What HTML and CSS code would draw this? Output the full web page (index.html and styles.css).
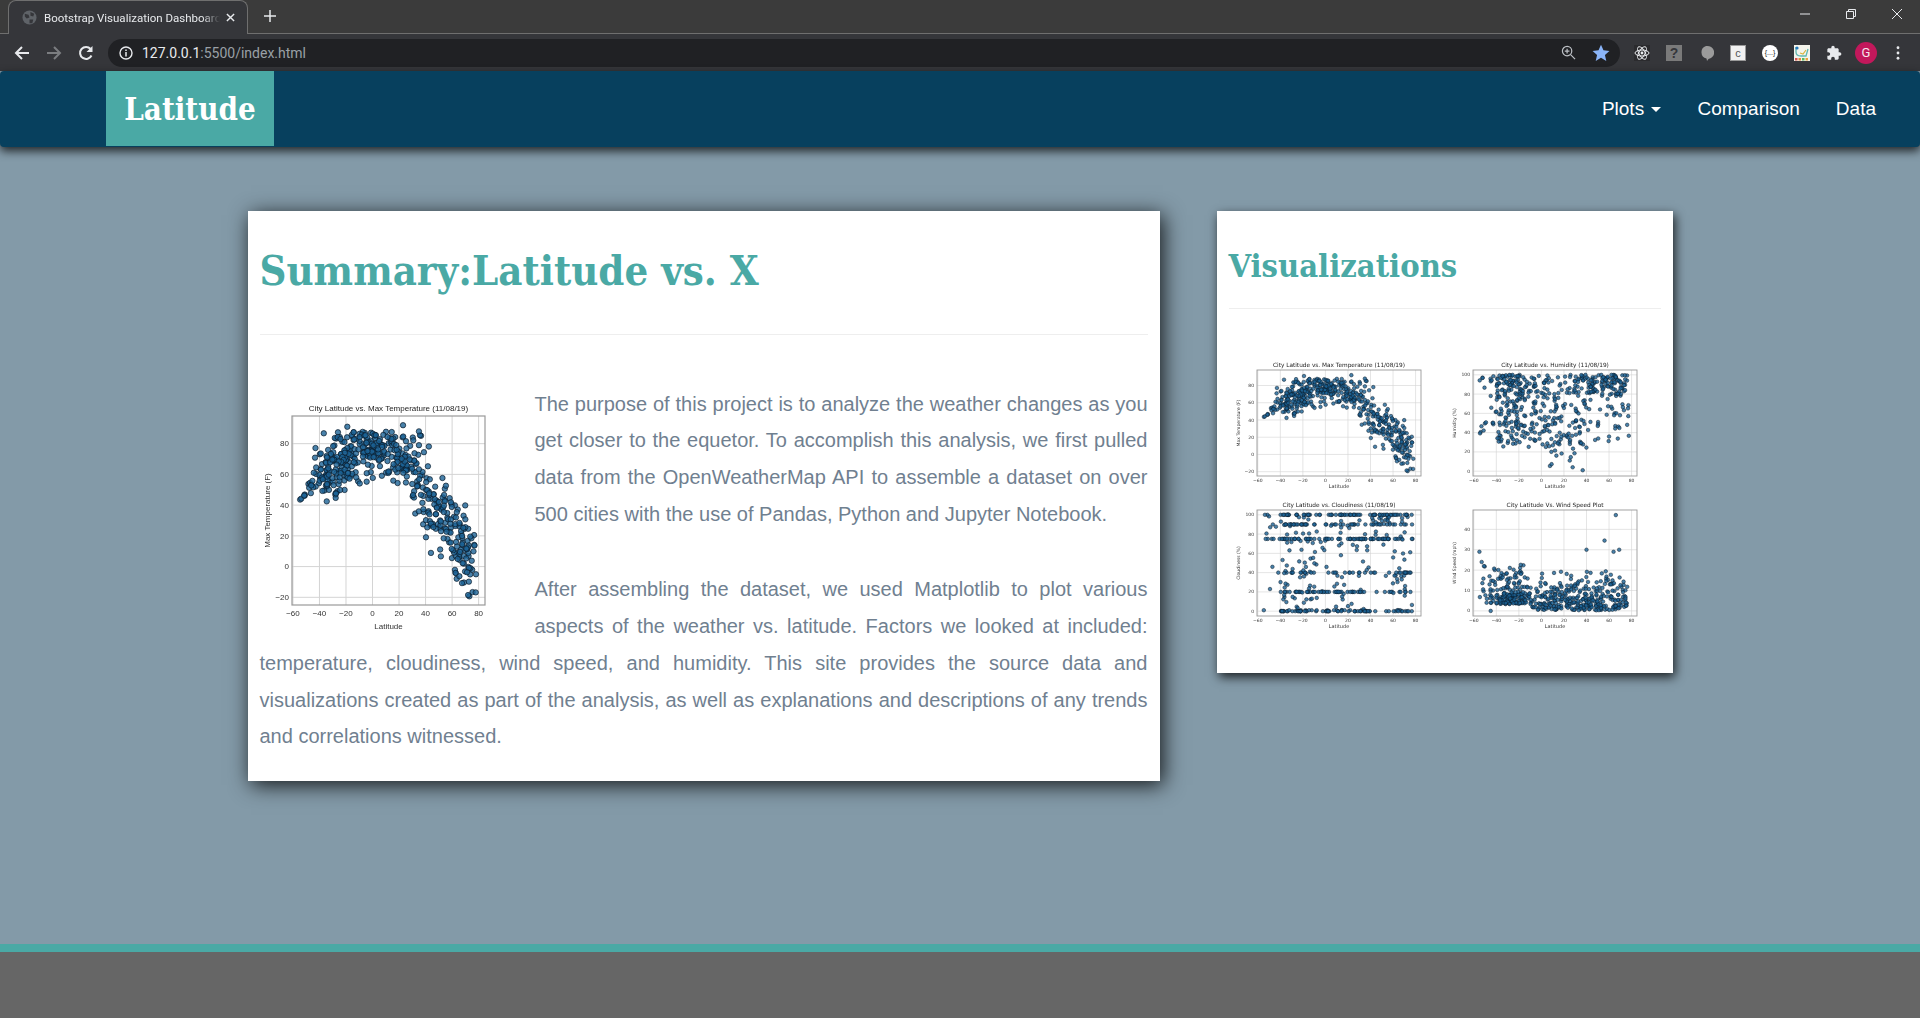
FILE: index.html
```html
<!DOCTYPE html>
<html lang="en">
<head>
  <meta charset="UTF-8" />
  <title>Bootstrap Visualization Dashboard</title>
  <link rel="stylesheet" href="styles.css">
</head>
<body>
  <div class="tabstrip">
    <div class="tab">
      <svg class="globe" viewBox="0 0 16 16"><circle cx="8" cy="8" r="7.5" fill="#5f6368"/><path d="M3 4l4 1 1 3-3 1-2-2zM9 2l4 2-1 3-3-1zM8 10l4 0-1 4-3 0z" fill="#35363a"/></svg>
      <span class="tab-title">Bootstrap Visualization Dashboard</span>
      <svg class="tab-close" viewBox="0 0 10 10"><path d="M1 1l8 8M9 1l-8 8" stroke="#e8eaed" stroke-width="1.6"/></svg>
    </div>
    <svg class="new-tab" viewBox="0 0 12 12"><path d="M6 0v12M0 6h12" stroke="#e8eaed" stroke-width="1.5"/></svg>
    <div class="window-btns">
      <svg viewBox="0 0 12 12"><path d="M1 6h10" stroke="#e8eaed" stroke-width="1"/></svg>
      <svg viewBox="0 0 12 12"><path d="M1.5 3.5h7v7h-7zM3.5 3.5v-2h7v7h-2" fill="none" stroke="#e8eaed" stroke-width="1"/></svg>
      <svg viewBox="0 0 12 12"><path d="M1 1l10 10M11 1l-10 10" stroke="#e8eaed" stroke-width="1"/></svg>
    </div>
  </div>

  <div class="toolbar">
    <svg class="tool" viewBox="0 0 16 16"><path d="M15 8H2M8 2L2 8l6 6" fill="none" stroke="#e8eaed" stroke-width="2"/></svg>
    <svg class="tool" viewBox="0 0 16 16"><path d="M1 8h13M8 2l6 6-6 6" fill="none" stroke="#7b7d80" stroke-width="2"/></svg>
    <svg class="tool" viewBox="0 0 16 16"><path d="M13.5 10.5A6 6 0 1 1 12.6 4" fill="none" stroke="#e8eaed" stroke-width="2"/><path d="M14.5 1v6h-6z" fill="#e8eaed"/></svg>
    <div class="omnibox">
      <svg class="info" viewBox="0 0 14 14"><circle cx="7" cy="7" r="6" fill="none" stroke="#e8eaed" stroke-width="1.4"/><path d="M7 6v4.5M7 3.4v1.6" stroke="#e8eaed" stroke-width="1.5"/></svg>
      <span class="url"><b>127.0.0.1</b>:5500/index.html</span>
      <svg class="zoom-ico" viewBox="0 0 16 16"><circle cx="6.5" cy="6.5" r="5" fill="none" stroke="#bdc1c6" stroke-width="1.3"/><path d="M10.2 10.2L15 15M4 6.5h5M6.5 4v5" stroke="#bdc1c6" stroke-width="1.3"/></svg>
      <svg class="star" viewBox="0 0 16 16"><path d="M8 .7l2.2 4.9 5.3.6-4 3.6 1.2 5.2L8 12.3l-4.7 2.7 1.2-5.2-4-3.6 5.3-.6z" fill="#8ab4f8"/></svg>
    </div>
    <div class="extensions">
      <svg class="ext" viewBox="0 0 16 16"><rect width="16" height="16" fill="#2b2b2e"/><g fill="none" stroke="#e8eaed" stroke-width="1"><ellipse cx="8" cy="8" rx="7" ry="3"/><ellipse cx="8" cy="8" rx="7" ry="3" transform="rotate(60 8 8)"/><ellipse cx="8" cy="8" rx="7" ry="3" transform="rotate(120 8 8)"/></g><circle cx="8" cy="8" r="1.4" fill="#e8eaed"/></svg>
      <span class="ext ext-help">?</span>
      <svg class="ext" viewBox="0 0 16 16"><path d="M8 1a6.8 6.5 0 0 1 2.5 13L9 16l-.5-2.6A6.8 6.5 0 0 1 8 1z" fill="#9b9b9b"/></svg>
      <span class="ext ext-cal">c</span>
      <span class="ext ext-json">{...}</span>
      <svg class="ext" viewBox="0 0 16 16"><rect width="16" height="16" fill="#f4f4ec"/><path d="M2 2v5q0 4 5 4h5l2-7" fill="none" stroke="#5fb6b0" stroke-width="1.3"/><circle cx="3" cy="3" r="1.6" fill="#2277bb"/><path d="M6 8l3 1 3-4" fill="none" stroke="#d8b43c" stroke-width="1.2"/><rect x="1" y="13" width="2.5" height="2.5" fill="#d9534f"/><rect x="4.5" y="13" width="2.5" height="2.5" fill="#e88b3c"/><rect x="8" y="13" width="2.5" height="2.5" fill="#5cb85c"/><rect x="11.5" y="13" width="2.5" height="2.5" fill="#e8a33c"/></svg>
      <svg class="ext" viewBox="0 0 24 24"><path d="M20.5 11H19V7c0-1.1-.9-2-2-2h-4V3.5C13 2.12 11.88 1 10.5 1S8 2.12 8 3.5V5H4c-1.1 0-1.99.9-1.99 2v3.8H3.5c1.49 0 2.7 1.21 2.7 2.7s-1.21 2.7-2.7 2.7H2V20c0 1.1.9 2 2 2h3.8v-1.5c0-1.49 1.21-2.7 2.7-2.7 1.49 0 2.7 1.21 2.7 2.7V22H17c1.1 0 2-.9 2-2v-4h1.5c1.38 0 2.5-1.12 2.5-2.5S21.88 11 20.5 11z" fill="#e8eaed"/></svg>
      <span class="avatar">G</span>
      <svg class="dots" viewBox="0 0 4 16"><circle cx="2" cy="2" r="1.6" fill="#e8eaed"/><circle cx="2" cy="8" r="1.6" fill="#e8eaed"/><circle cx="2" cy="14" r="1.6" fill="#e8eaed"/></svg>
    </div>
  </div>

  <nav class="navbar">
    <a class="brand" href="#">Latitude</a>
    <ul class="nav-links">
      <li><a href="#">Plots <span class="caret"></span></a></li>
      <li><a href="#">Comparison</a></li>
      <li><a href="#">Data</a></li>
    </ul>
  </nav>

  <main class="content">
    <section class="card card-main">
      <h1>Summary:Latitude vs. X</h1>
      <hr />
      <svg class="plot plot-large" data-kind="temp" data-box="32,30,225,219" viewBox="0 0 250 250" width="250" height="250"></svg>
      <p>The purpose of this project is to analyze the weather changes as you get closer to the equetor. To accomplish this analysis, we first pulled data from the OpenWeatherMap API to assemble a dataset on over 500 cities with the use of Pandas, Python and Jupyter Notebook.</p>
      <p>After assembling the dataset, we used Matplotlib to plot various aspects of the weather vs. latitude. Factors we looked at included: temperature, cloudiness, wind speed, and humidity. This site provides the source data and visualizations created as part of the analysis, as well as explanations and descriptions of any trends and correlations witnessed.</p>
    </section>

    <section class="card card-side">
      <h2>Visualizations</h2>
      <hr />
      <div class="plot-grid">
        <svg class="plot" data-kind="temp" data-box="28,15,192,121" viewBox="0 0 216 140"></svg>
        <svg class="plot" data-kind="humidity" data-box="28,15,192,121" viewBox="0 0 216 140"></svg>
        <svg class="plot" data-kind="cloud" data-box="28,15,192,121" viewBox="0 0 216 140"></svg>
        <svg class="plot" data-kind="wind" data-box="28,15,192,121" viewBox="0 0 216 140"></svg>
      </div>
    </section>
  </main>

  <footer class="footer"></footer>

  <script src="plots.js"></script>
</body>
</html>
```

FILE: styles.css
```css
* {
  box-sizing: border-box;
}
body {
  margin: 0;
  height: 1018px;
  overflow: hidden;
  display: flex;
  flex-direction: column;
  font-family: "Liberation Sans", Arial, sans-serif;
  background-color: #839aa8;
}

/* browser chrome */
.tabstrip {
  height: 34px;
  display: flex;
  align-items: flex-end;
  background-color: #3b3b3b;
  border-bottom: 1px solid #6f6f6f;
  padding-left: 8px;
}
.tab {
  width: 240px;
  height: 34px;
  margin-bottom: -1px;
  display: flex;
  align-items: center;
  padding: 0 12px 0 13px;
  background-color: #35363a;
  border: 1px solid #6f6f6f;
  border-bottom: none;
  border-radius: 8px 8px 0 0;
}
.globe {
  width: 15px;
  height: 15px;
  flex: none;
}
.tab-title {
  flex: 1;
  margin-left: 7px;
  overflow: hidden;
  white-space: nowrap;
  color: #e8eaed;
  font-family: Roboto, sans-serif;
  font-size: 11.5px;
  -webkit-mask-image: linear-gradient(to right, #000 90%, transparent);
  mask-image: linear-gradient(to right, #000 90%, transparent);
}
.tab-close {
  width: 9px;
  height: 9px;
  flex: none;
  margin-left: 6px;
}
.new-tab {
  width: 12px;
  height: 12px;
  margin: 0 0 11px 16px;
}
.window-btns {
  margin-left: auto;
  align-self: flex-start;
  display: flex;
  gap: 34px;
  padding: 8px 17px 0 0;
}
.window-btns svg {
  width: 12px;
  height: 12px;
}
.toolbar {
  height: 37px;
  display: flex;
  align-items: center;
  padding-left: 14px;
  background-color: #35363a;
}
.tool {
  width: 16px;
  height: 16px;
  margin-right: 16px;
  flex: none;
}
.omnibox {
  width: 1512px;
  height: 28px;
  margin-left: -2px;
  display: flex;
  align-items: center;
  padding: 0 10px 0 11px;
  border-radius: 14px;
  background-color: #202124;
}
.info {
  width: 14px;
  height: 14px;
}
.url {
  margin-left: 9px;
  color: #9aa0a6;
  font-family: Roboto, sans-serif;
  font-size: 14px;
}
.url b {
  font-weight: 400;
  color: #e8eaed;
}
.zoom-ico {
  width: 15px;
  height: 15px;
  margin-left: auto;
}
.star {
  width: 18px;
  height: 18px;
  margin-left: 16px;
}
.extensions {
  display: flex;
  align-items: center;
  margin-left: 6px;
}
.ext {
  width: 16px;
  height: 16px;
  margin: 0 8px;
  flex: none;
  display: flex;
  align-items: center;
  justify-content: center;
}
.ext-help {
  background-color: #7a7a7a;
  color: #35363a;
  font-weight: bold;
  font-size: 14px;
}
.ext-cal {
  background-color: #f1f1f1;
  color: #555;
  font-size: 11px;
  border: 1px solid #999;
}
.ext-json {
  background-color: #fff;
  color: #222;
  border-radius: 50%;
  font-size: 7px;
}
.avatar {
  width: 22px;
  height: 22px;
  margin: 0 5px;
  flex: none;
  display: flex;
  align-items: center;
  justify-content: center;
  border-radius: 50%;
  background-color: #c2185b;
  color: #f5e6ec;
  font-family: Roboto, sans-serif;
  font-size: 13px;
}
.dots {
  width: 4px;
  height: 14px;
  margin-left: 14px;
  flex: none;
}

/* page */
.navbar {
  height: 76px;
  flex: none;
  display: flex;
  justify-content: space-between;
  padding: 0 26px 0 106px;
  background-color: #07405e;
  border-radius: 4px;
  box-shadow: 0 4px 10px rgba(0, 0, 0, 0.75);
  position: relative;
}
.brand {
  width: 168px;
  height: 75px;
  display: flex;
  align-items: center;
  justify-content: center;
  background-color: #4aa9a5;
  color: #fff;
  font-family: "DejaVu Serif Condensed", "Liberation Serif", serif;
  font-weight: bold;
  font-size: 31px;
  text-decoration: none;
}
.nav-links {
  display: flex;
  align-items: center;
  list-style: none;
  margin: 0;
  padding: 0;
}
.nav-links a {
  padding: 0 18px;
  color: #fff;
  font-size: 19px;
  text-decoration: none;
}
.caret {
  display: inline-block;
  margin-left: 2px;
  vertical-align: middle;
  border-top: 5px solid #fff;
  border-left: 5px solid transparent;
  border-right: 5px solid transparent;
}
.content {
  flex: 1;
  display: flex;
  justify-content: center;
  align-items: flex-start;
  gap: 57px;
  padding-top: 64px;
}
.card {
  padding: 0 12px;
  background-color: #fff;
}
.card-main {
  width: 912px;
  height: 570px;
  box-shadow: 3px 4px 20px rgba(0, 0, 0, 0.85);
}
.card-side {
  width: 456px;
  height: 462px;
  box-shadow: 2px 4px 10px rgba(0, 0, 0, 0.8);
}
h1,
h2 {
  margin: 0;
  color: #4aa9a5;
  font-family: "DejaVu Serif Condensed", "Liberation Serif", serif;
  font-weight: bold;
  line-height: 1.1;
}
h1 {
  padding-top: 37px;
  font-size: 41.5px;
}
h2 {
  padding-top: 38px;
  font-size: 32.4px;
}
hr {
  margin: 0;
  border: none;
  border-top: 1px solid #eee;
}
.card-main hr {
  margin-top: 40px;
  margin-bottom: 51px;
}
.card-side hr {
  margin-top: 23px;
  margin-bottom: 46px;
}
p {
  margin: 0 0 39px;
  color: #708090;
  font-size: 20px;
  line-height: 36.7px;
  text-align: justify;
}
.plot {
  display: block;
  filter: blur(0.4px);
}
.plot-large {
  float: left;
  margin-right: 25px;
  filter: blur(0.6px);
}
.plot-grid {
  display: grid;
  grid-template-columns: 216px 216px;
  grid-auto-rows: 140px;
}
.plot-grid .plot {
  width: 216px;
  height: 140px;
}
.footer {
  height: 74px;
  flex: none;
  background-color: #666;
  border-top: 8px solid #4aa9a5;
}
```

FILE: plots.js
```js
// scatter plots, drawn from a seeded generator so every run looks the same
let seed = 1908;
function rnd() {
  seed = (seed * 16807) % 2147483647;
  return seed / 2147483647;
}
function gauss() {
  return (rnd() + rnd() + rnd() - 1.5) / 1.5;
}

function randomLat() {
  const r = rnd();
  if (r < 0.04) return -55 + rnd() * 15;
  if (r < 0.3) return -40 + rnd() * 22;
  if (r < 0.55) return -18 + rnd() * 36;
  if (r < 0.97) return 18 + rnd() * 55;
  return 72 + rnd() * 6;
}

const tempCurve = [[-60, 32], [-50, 48], [-40, 58], [-30, 66], [-10, 76], [10, 76], [25, 68], [40, 48], [50, 33], [60, 25], [70, 6], [80, -8]];
function tempAt(lat) {
  for (let i = 0; i < tempCurve.length - 1; i++) {
    const a = tempCurve[i], b = tempCurve[i + 1];
    if (lat <= b[0]) return a[1] + (b[1] - a[1]) * (lat - a[0]) / (b[0] - a[0]);
  }
  return -8;
}

function makeData(kind) {
  const pts = [];
  for (let i = 0; i < 520; i++) {
    const lat = randomLat();
    let val;
    if (kind === "temp") {
      val = tempAt(lat) + gauss() * (lat < -45 ? 8 : lat > 30 ? 40 : 28);
      if (val > 88) val = 80 + rnd() * 8;
    } else if (kind === "humidity") {
      if (lat > 40 && rnd() < 0.55) val = 80 + rnd() * 20;
      else if (lat > 5 && lat < 45 && rnd() < 0.15) val = rnd() * 40;
      else val = 100 - Math.pow(rnd(), 1.4) * 75;
      if (lat < -35) val = 30 + rnd() * 70;
    } else if (kind === "cloud") {
      const levels = [0, 0, 0, 1, 20, 20, 40, 40, 75, 75, 75, 90, 90, 100, 100, 100];
      val = rnd() < 0.72 ? levels[Math.floor(rnd() * levels.length)] : rnd() * 100;
      if (lat > 38 && lat < 60 && rnd() < 0.4) val = rnd() < 0.5 ? 75 : 90 + rnd() * 10;
    } else {
      val = -Math.log(1 - rnd() * 0.95) * 6.5 + 0.3;
      if (lat < -10) val += 3;
    }
    pts.push([lat, val]);
  }
  if (kind === "wind") pts.push([66, 47], [56, 34.5], [40, 30], [69, 30], [-55, 29], [64, 29], [-53, 24], [-51, 22], [-46, 17], [-46, 13], [-45, 4], [-45, 0]);
  if (kind === "temp") pts.push([-19, 91], [23, 92], [35, 88], [78, -5]);
  return pts;
}

const charts = {
  temp: { title: "City Latitude vs. Max Temperature (11/08/19)", ylabel: "Max Temperature (F)", ymin: -25, ymax: 98, ticks: [-20, 0, 20, 40, 60, 80] },
  humidity: { title: "City Latitude vs. Humidity (11/08/19)", ylabel: "Humidity (%)", ymin: -5, ymax: 105, ticks: [0, 20, 40, 60, 80, 100] },
  cloud: { title: "City Latitude vs. Cloudiness (11/08/19)", ylabel: "Cloudiness (%)", ymin: -5, ymax: 105, ticks: [0, 20, 40, 60, 80, 100] },
  wind: { title: "City Latitude Vs. Wind Speed Plot", ylabel: "Wind Speed (mph)", ymin: -2.5, ymax: 49.5, ticks: [0, 10, 20, 30, 40] }
};

const cache = {};
const NS = "http://www.w3.org/2000/svg";

function add(svg, tag, attrs, text) {
  const el = document.createElementNS(NS, tag);
  for (const k in attrs) el.setAttribute(k, attrs[k]);
  if (text !== undefined) el.textContent = text;
  svg.appendChild(el);
}

document.querySelectorAll(".plot").forEach(function (svg) {
  const kind = svg.dataset.kind;
  const c = charts[kind];
  const box = svg.dataset.box.split(",").map(Number);
  const x0 = box[0], y0 = box[1], x1 = box[2], y1 = box[3];
  const w = x1 - x0;
  const large = w > 180;
  const font = large ? "Liberation Sans" : "DejaVu Sans";
  const fs = large ? 8 : 4.5;
  const px = (lat) => x0 + (lat + 60.7) / 145.5 * w;
  const py = (v) => y1 - (v - c.ymin) / (c.ymax - c.ymin) * (y1 - y0);
  const ink = "#333";

  add(svg, "text", { x: (x0 + x1) / 2, y: y0 - (large ? 5 : 3), "text-anchor": "middle", "font-size": large ? 8 : 5.8, "font-family": font, fill: "#222" }, c.title);

  for (let lat = -60; lat <= 80; lat += 20) {
    add(svg, "line", { x1: px(lat), x2: px(lat), y1: y0, y2: y1, stroke: "#d4d4d4", "stroke-width": large ? 1 : 0.6 });
    add(svg, "text", { x: px(lat), y: y1 + (large ? 11 : 6), "text-anchor": "middle", "font-size": fs, "font-family": font, fill: ink }, String(lat).replace("-", "\u2212"));
  }
  c.ticks.forEach(function (t) {
    add(svg, "line", { x1: x0, x2: x1, y1: py(t), y2: py(t), stroke: "#d4d4d4", "stroke-width": large ? 1 : 0.6 });
    add(svg, "text", { x: x0 - 3, y: py(t) + fs * 0.35, "text-anchor": "end", "font-size": fs, "font-family": font, fill: ink }, String(t).replace("-", "\u2212"));
  });

  const pts = cache[kind] || (cache[kind] = makeData(kind));
  pts.forEach(function (p) {
    add(svg, "circle", { cx: px(p[0]), cy: py(p[1]), r: large ? 2.7 : 1.8, fill: "#1c6396", "fill-opacity": 0.8, stroke: "#0a1a28", "stroke-width": large ? 0.7 : 0.5 });
  });

  add(svg, "rect", { x: x0, y: y0, width: w, height: y1 - y0, fill: "none", stroke: "#999", "stroke-width": large ? 1.2 : 0.9 });
  add(svg, "text", { x: (x0 + x1) / 2, y: y1 + (large ? 24 : 12), "text-anchor": "middle", "font-size": large ? 8 : 5, "font-family": font, fill: ink }, "Latitude");
  const yMid = (y0 + y1) / 2;
  const lx = x0 - (large ? 22 : 17);
  add(svg, "text", { x: lx, y: yMid, "text-anchor": "middle", transform: "rotate(-90 " + lx + " " + yMid + ")", "font-size": large ? 8 : 4.5, "font-family": font, fill: ink }, c.ylabel);
});
```
